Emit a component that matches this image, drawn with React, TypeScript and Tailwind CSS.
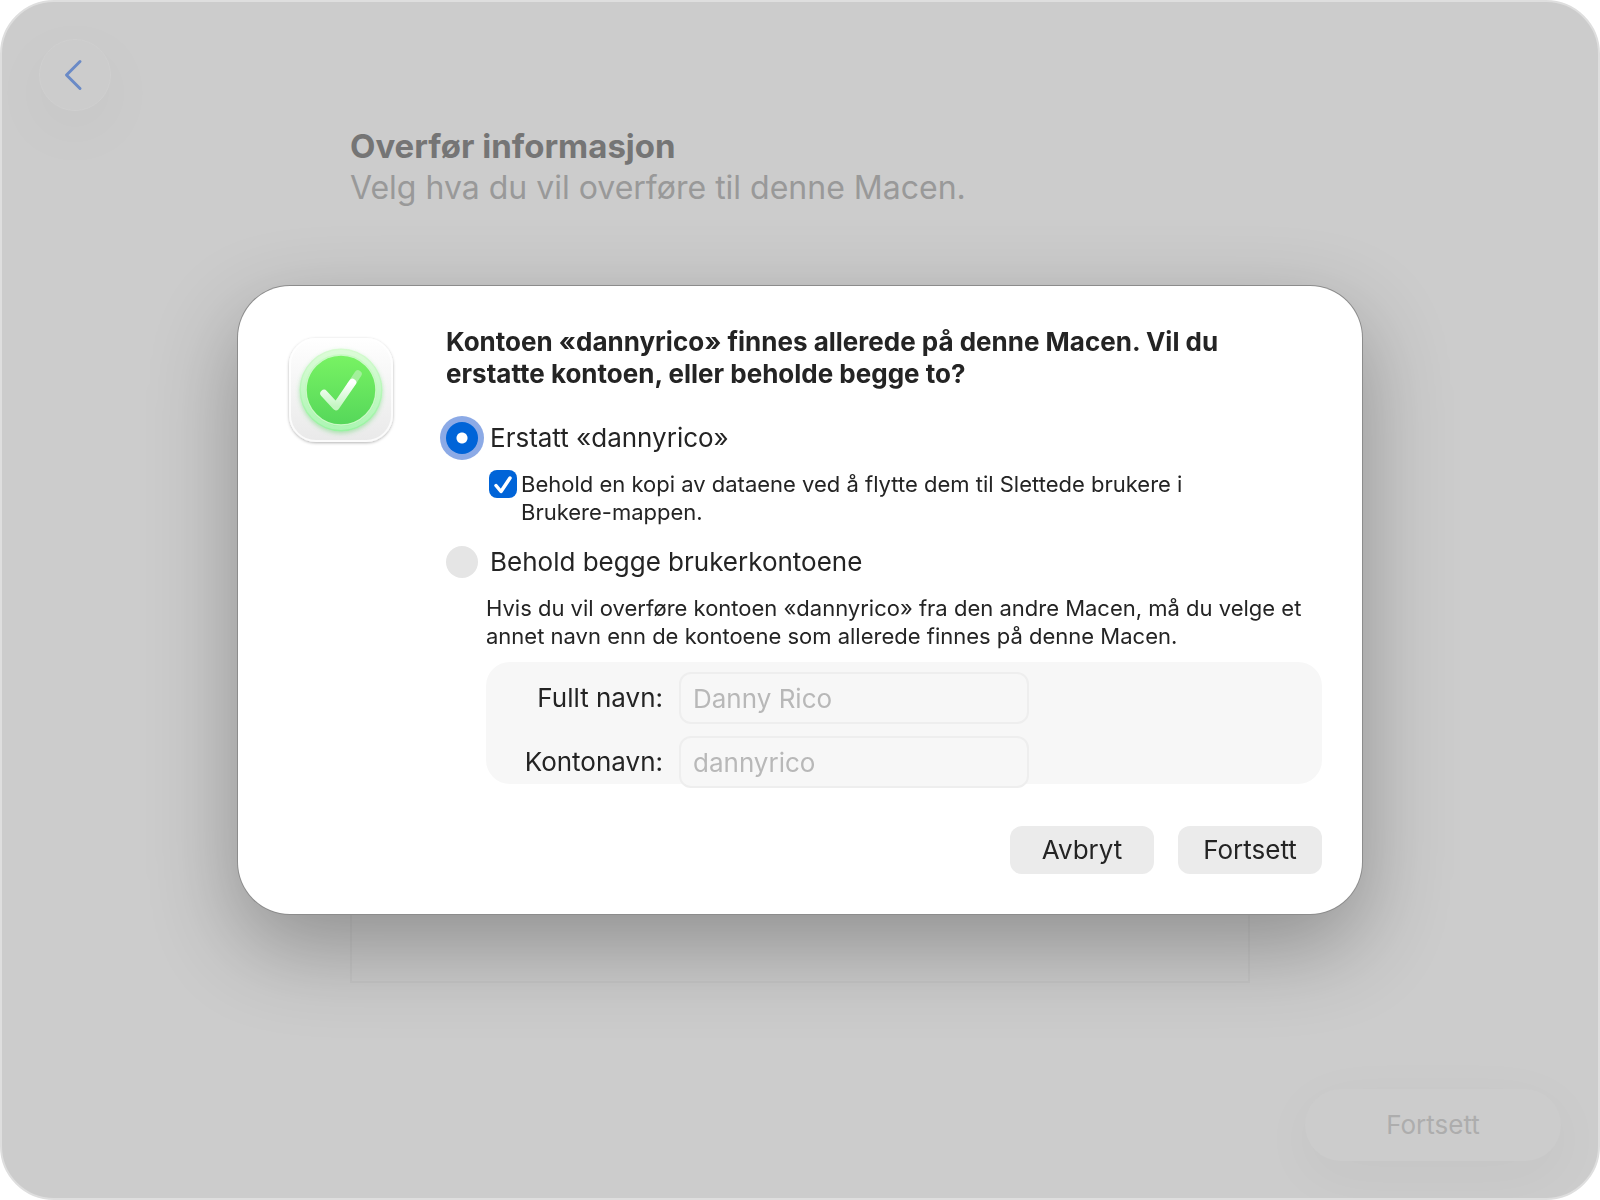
import { useState } from 'react';

const fontStack = "font-['Inter','Liberation_Sans',sans-serif]";

function AssistantIcon() {
  return (
    <svg viewBox="0 0 112 116" className="-m-1 h-[116px] w-[112px] shrink-0" aria-hidden="true">
      <defs>
        <linearGradient id="tile" x1="0" y1="0" x2="0" y2="1">
          <stop offset="0" stopColor="#ffffff" />
          <stop offset="1" stopColor="#e9e9e9" />
        </linearGradient>
        <linearGradient id="halo" x1="0" y1="0" x2="0" y2="1">
          <stop offset="0" stopColor="#d6fbd0" />
          <stop offset="1" stopColor="#97f3a0" />
        </linearGradient>
        <linearGradient id="disc" x1="0" y1="0" x2="0" y2="1">
          <stop offset="0" stopColor="#78f363" />
          <stop offset="1" stopColor="#55d75a" />
        </linearGradient>
        <linearGradient id="tick" x1="0" y1="0" x2="0" y2="1">
          <stop offset="0" stopColor="#ffffff" />
          <stop offset="1" stopColor="#c4f6c2" />
        </linearGradient>
        <filter id="tileShadow" x="-20%" y="-20%" width="140%" height="140%">
          <feDropShadow dx="0" dy="1" stdDeviation="1.5" floodOpacity="0.3" />
        </filter>
        <filter id="haloShadow" x="-20%" y="-20%" width="140%" height="140%">
          <feDropShadow dx="0" dy="2" stdDeviation="2" floodColor="#4fd35a" floodOpacity="0.4" />
        </filter>
      </defs>
      <rect x="4" y="4" width="104" height="104" rx="27" fill="url(#tile)" filter="url(#tileShadow)" />
      <rect x="5" y="5" width="102" height="102" rx="26" fill="none" stroke="#ffffff" strokeOpacity="0.8" strokeWidth="2" />
      <circle cx="56" cy="56" r="41.5" fill="url(#halo)" filter="url(#haloShadow)" />
      <circle cx="56" cy="56" r="38" fill="none" stroke="#ffffff" strokeOpacity="0.2" strokeWidth="4" />
      <circle cx="56" cy="56" r="35" fill="url(#disc)" stroke="#c8f9c4" strokeWidth="1.5" />
      <path d="M66 50.500L73 40" fill="none" stroke="#a3f09b" strokeWidth="7.500" strokeLinecap="round" />
      <path
        d="M39 59.500L51 72.500L67.500 48.500"
        fill="none"
        stroke="url(#tick)"
        strokeWidth="7.500"
        strokeLinecap="round"
        strokeLinejoin="round"
      />
    </svg>
  );
}

type RadioRowProps = {
  id: string;
  label: string;
  checked: boolean;
  onChange: () => void;
};

function RadioRow({ id, label, checked, onChange }: RadioRowProps) {
  return (
    <div className="flex items-center gap-3">
      <input
        type="radio"
        id={id}
        name="account"
        checked={checked}
        onChange={onChange}
        className="size-8 shrink-0 appearance-none rounded-full bg-[#e5e5e5] checked:bg-[radial-gradient(circle,#fff_5px,#0064d8_6px)] checked:ring-6 checked:ring-[#8caae6]"
      />
      <label htmlFor={id} className="text-[26px] leading-8">
        {label}
      </label>
    </div>
  );
}

type NameFieldProps = {
  id: string;
  label: string;
  value: string;
  disabled: boolean;
};

function NameField({ id, label, value, disabled }: NameFieldProps) {
  return (
    <div className="flex items-center gap-4">
      <label htmlFor={id} className="w-[177px] shrink-0 text-right text-[26px] leading-8">
        {label}
      </label>
      <input
        type="text"
        id={id}
        defaultValue={value}
        disabled={disabled}
        className="h-[52px] w-[350px] min-w-0 rounded-xl border-2 border-[#eeeeee] bg-[#f7f7f7] px-3 text-[26px] leading-8 disabled:text-[#b8b8b8]"
      />
    </div>
  );
}

export default function App() {
  const [choice, setChoice] = useState<'replace' | 'keep'>('replace');
  const [keepCopy, setKeepCopy] = useState(true);

  return (
    <div className={`${fontStack} bg-white text-[#242424]`}>
      <div className="flex min-h-screen flex-col overflow-hidden rounded-[54px] border-2 border-[#dedede] bg-[#cccccc]">
        <header className="px-[37px] pt-[37px]">
          <button
            type="button"
            aria-label="Tilbake"
            className="flex size-[72px] items-center justify-center rounded-full border border-[#cfcfcf] bg-[#cccccc] shadow-[0_18px_70px_rgba(0,0,0,0.04)]"
          >
            <svg viewBox="0 0 20 32" className="mr-1 h-8 w-5" fill="none" aria-hidden="true">
              <path d="M17 2.500L3.500 16L17 29.500" stroke="#6a8ac6" strokeWidth="3" strokeLinecap="round" strokeLinejoin="round" />
            </svg>
          </button>
        </header>

        <main className="mx-auto flex w-full max-w-[900px] flex-1 flex-col pt-[15px]">
          <h1 className="text-[33px] leading-[41px] font-bold text-[#757575]">Overfør informasjon</h1>
          <p className="text-[32px] leading-[41px] text-[#999999]">Velg hva du vil overføre til denne Macen.</p>
          <div className="mt-24 flex-1 border-2 border-[#c6c6c6]"></div>
        </main>

        <footer className="flex justify-end px-[37px] pt-[106px] pb-[37px]">
          <button
            type="button"
            disabled
            className="h-[72px] w-64 rounded-full bg-[#cccccc] text-[26px] leading-8 text-[#adadad] shadow-[0_14px_60px_rgba(0,0,0,0.04)]"
          >
            Fortsett
          </button>
        </footer>
      </div>

      <div className="fixed inset-0 flex items-center justify-center p-4">
        <div
          role="dialog"
          aria-modal="true"
          aria-labelledby="dialog-title"
          className="flex w-full max-w-[1124px] rounded-[52px] bg-white py-10 pr-10 pl-[51px] shadow-[0_0_0_1px_#8c8c8c,0_32px_88px_rgba(0,0,0,0.3)]"
        >
          <div className="w-[157px] shrink-0 pt-3">
            <AssistantIcon />
          </div>

          <form className="min-w-0 flex-1" onSubmit={(e) => e.preventDefault()}>
            <h2 id="dialog-title" className="text-[26px] leading-8 font-bold">
              Kontoen «dannyrico» finnes allerede på denne Macen. Vil du
              <br />
              erstatte kontoen, eller beholde begge to?
            </h2>

            <div className="mt-8">
              <RadioRow
                id="replace"
                label="Erstatt «dannyrico»"
                checked={choice === 'replace'}
                onChange={() => setChoice('replace')}
              />
              <div className="mt-4 ml-[43px] flex gap-1">
                <span className="grid size-7 shrink-0">
                  <input
                    type="checkbox"
                    id="keep-copy"
                    checked={keepCopy}
                    onChange={(e) => setKeepCopy(e.target.checked)}
                    className="peer col-start-1 row-start-1 size-7 appearance-none rounded-lg bg-[#e5e5e5] checked:bg-[#0064d8]"
                  />
                  <svg
                    viewBox="0 0 28 28"
                    className="pointer-events-none invisible col-start-1 row-start-1 size-7 peer-checked:visible"
                    fill="none"
                    aria-hidden="true"
                  >
                    <path d="M7 15.500L12 21.500L21 8" stroke="#ffffff" strokeWidth="3.500" strokeLinecap="round" strokeLinejoin="round" />
                  </svg>
                </span>
                <label htmlFor="keep-copy" className="text-[22px] leading-7">
                  Behold en kopi av dataene ved å flytte dem til Slettede brukere i
                  <br />
                  Brukere-mappen.
                </label>
              </div>
            </div>

            <div className="mt-5">
              <RadioRow
                id="keep"
                label="Behold begge brukerkontoene"
                checked={choice === 'keep'}
                onChange={() => setChoice('keep')}
              />
              <div className="mt-4 ml-10">
                <p className="text-[22px] leading-7">
                  Hvis du vil overføre kontoen «dannyrico» fra den andre Macen, må du velge et
                  <br />
                  annet navn enn de kontoene som allerede finnes på denne Macen.
                </p>
                <div className="mt-3 flex h-[122px] flex-col gap-3 rounded-3xl bg-[#f7f7f7] pt-[10px]">
                  <NameField id="full-name" label="Fullt navn:" value="Danny Rico" disabled={choice !== 'keep'} />
                  <NameField id="account-name" label="Kontonavn:" value="dannyrico" disabled={choice !== 'keep'} />
                </div>
              </div>
            </div>

            <div className="mt-[42px] flex justify-end gap-6">
              <button type="button" className="h-12 w-36 rounded-xl bg-[#ebebeb] text-[26px] leading-8">
                Avbryt
              </button>
              <button type="submit" className="h-12 w-36 rounded-xl bg-[#ebebeb] text-[26px] leading-8">
                Fortsett
              </button>
            </div>
          </form>
        </div>
      </div>
    </div>
  );
}
